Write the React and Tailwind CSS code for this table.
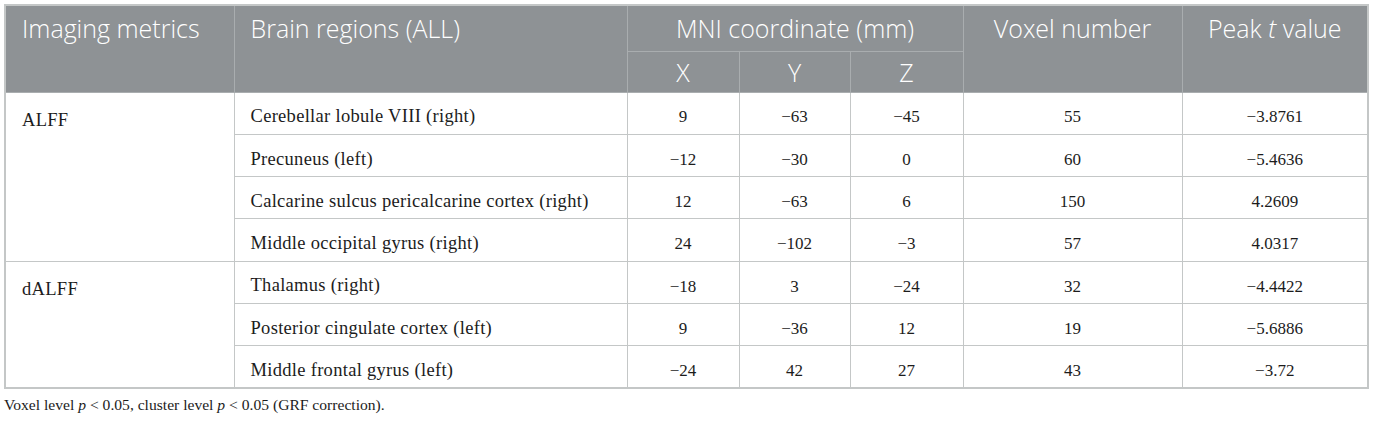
const rows = [
  { metric: 'ALFF', span: 4, region: 'Cerebellar lobule VIII (right)', x: '9', y: '−63', z: '−45', voxels: '55', t: '−3.8761' },
  { region: 'Precuneus (left)', x: '−12', y: '−30', z: '0', voxels: '60', t: '−5.4636' },
  { region: 'Calcarine sulcus pericalcarine cortex (right)', x: '12', y: '−63', z: '6', voxels: '150', t: '4.2609' },
  { region: 'Middle occipital gyrus (right)', x: '24', y: '−102', z: '−3', voxels: '57', t: '4.0317' },
  { metric: 'dALFF', span: 3, region: 'Thalamus (right)', x: '−18', y: '3', z: '−24', voxels: '32', t: '−4.4422' },
  { region: 'Posterior cingulate cortex (left)', x: '9', y: '−36', z: '12', voxels: '19', t: '−5.6886' },
  { region: 'Middle frontal gyrus (left)', x: '−24', y: '42', z: '27', voxels: '43', t: '−3.72' },
];

const head = "border border-[#a9adaf] text-white font-['Open_Sans',sans-serif] text-[25px] leading-[30px] font-light";
const cell = 'border border-[#c4c7c7] h-[42.3px] pt-[8px] pb-0 align-middle';
const text = 'px-[16px] text-[18.5px] tracking-[0.3px]';
const num = 'text-center text-[17px]';

export default function App() {
  return (
    <div className="bg-white w-[1375px] h-[421px] pt-[4px] pl-[4px] font-['Liberation_Serif',serif] text-[#1c1c1c]">
      <table className="table-fixed w-[1365px] border-collapse border-2 border-[#c4c7c7]">
        <colgroup>
          <col className="w-[229px]" />
          <col className="w-[393px]" />
          <col className="w-[112px]" />
          <col className="w-[111px]" />
          <col className="w-[113px]" />
          <col className="w-[219px]" />
          <col />
        </colgroup>
        <thead className="bg-[#8e9295]">
          <tr className="h-[46px]">
            <th rowSpan={2} className={`${head} text-left align-top px-[16px] pt-[7px]`}>Imaging metrics</th>
            <th rowSpan={2} className={`${head} text-left align-top px-[16px] pt-[7px]`}>Brain regions (ALL)</th>
            <th colSpan={3} className={`${head} text-center`}>MNI coordinate (mm)</th>
            <th rowSpan={2} className={`${head} text-center align-top pt-[7px]`}>Voxel number</th>
            <th rowSpan={2} className={`${head} text-center align-top pt-[7px]`}>
              Peak <i>t</i> value
            </th>
          </tr>
          <tr className="h-[41px]">
            <th className={`${head} text-center`}>X</th>
            <th className={`${head} text-center`}>Y</th>
            <th className={`${head} text-center`}>Z</th>
          </tr>
        </thead>
        <tbody>
          {rows.map((r, i) => (
            <tr key={i}>
              {r.metric && (
                <td rowSpan={r.span} className={`${cell} ${text} align-top pt-[14px]`}>{r.metric}</td>
              )}
              <td className={`${cell} ${text}`}>{r.region}</td>
              <td className={`${cell} ${num}`}>{r.x}</td>
              <td className={`${cell} ${num}`}>{r.y}</td>
              <td className={`${cell} ${num}`}>{r.z}</td>
              <td className={`${cell} ${num}`}>{r.voxels}</td>
              <td className={`${cell} ${num}`}>{r.t}</td>
            </tr>
          ))}
        </tbody>
      </table>
      <p className="mt-[6px] text-[15.6px] leading-5">
        Voxel level <i>p</i> &lt; 0.05, cluster level <i>p</i> &lt; 0.05 (GRF correction).
      </p>
    </div>
  );
}
